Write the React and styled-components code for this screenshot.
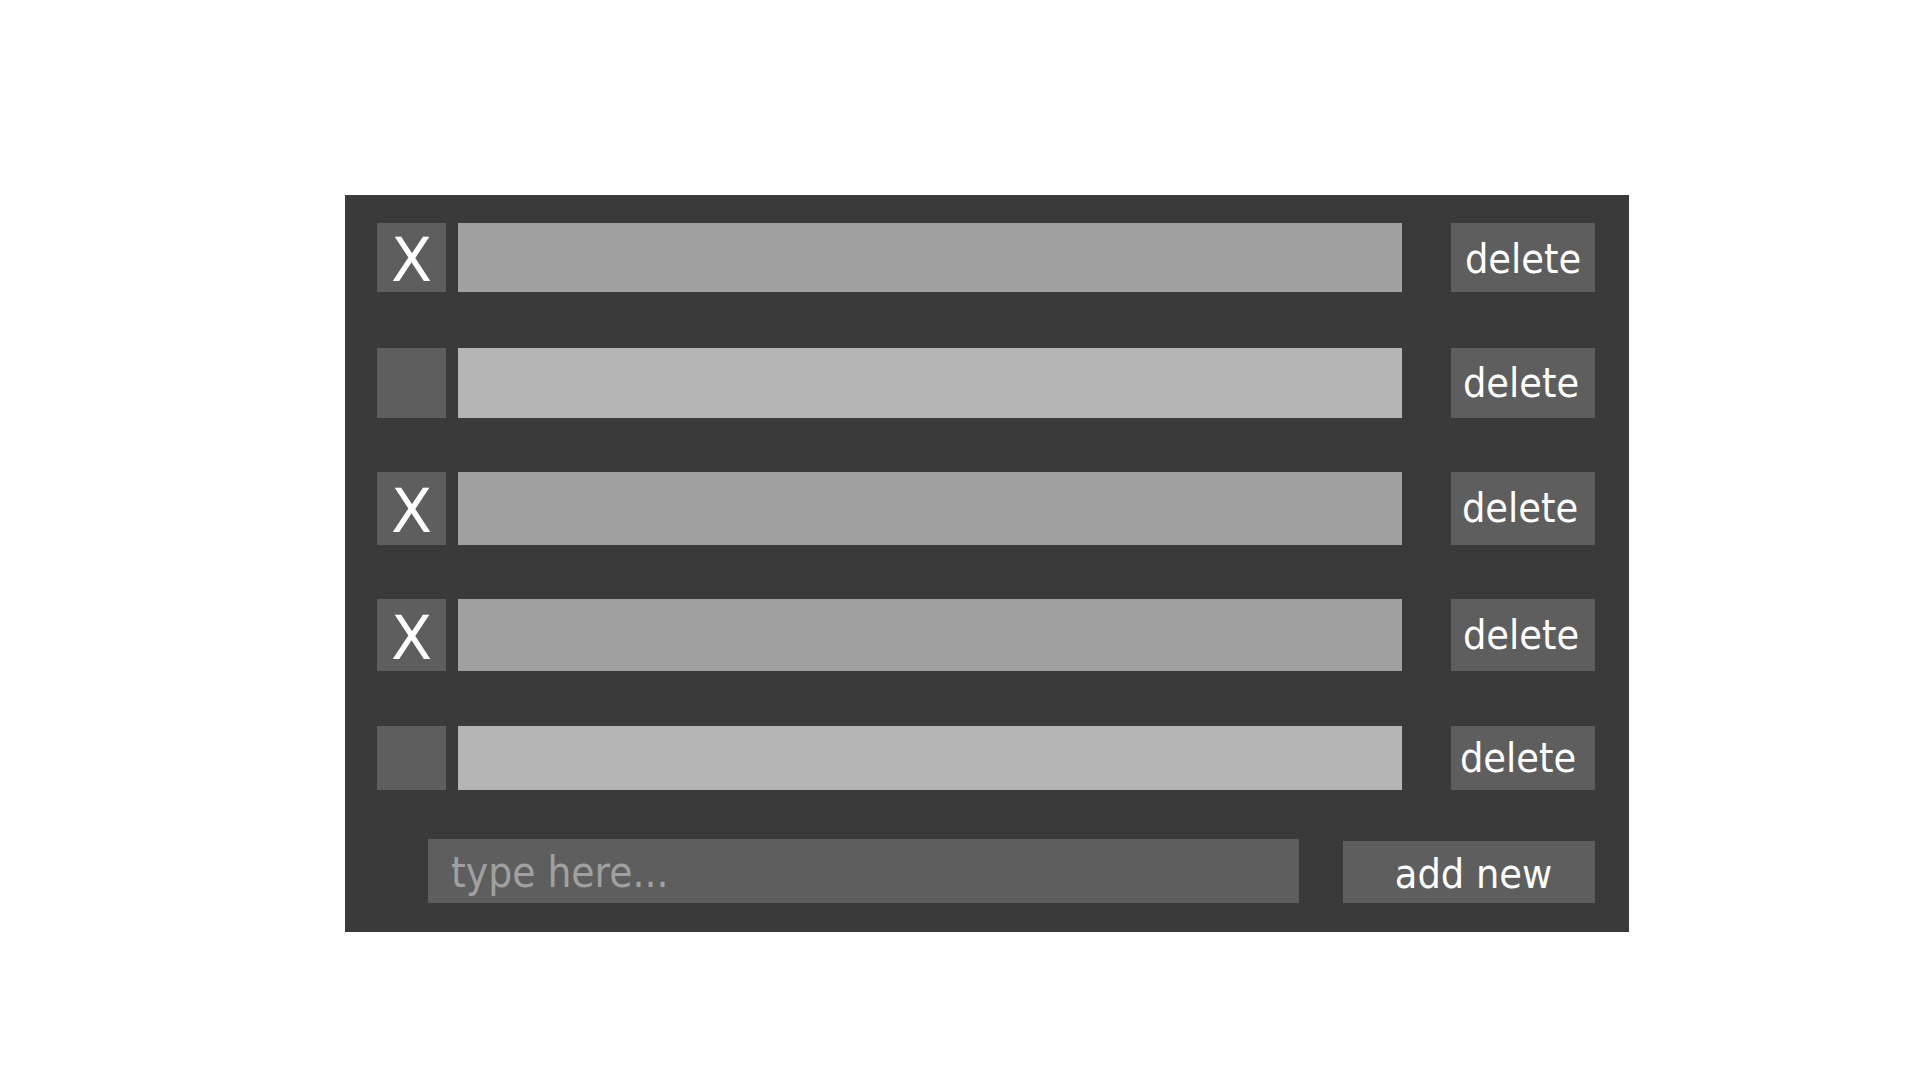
import React from 'react';
import styled, { createGlobalStyle } from 'styled-components';

const GlobalStyle = createGlobalStyle`
  html, body {
    margin: 0;
    padding: 0;
    background: #ffffff;
  }
  body {
    font-family: 'DejaVu Sans Condensed', 'DejaVu Sans', sans-serif;
    font-stretch: condensed;
  }
`;

const Page = styled.div`
  width: 1920px;
  height: 1080px;
  box-sizing: border-box;
  padding: 195px 0 0 345px;
`;

const Panel = styled.div`
  width: 1284px;
  box-sizing: border-box;
  padding: 28px 34px 29px 32px;
  background: #3a3a3a;
  display: flex;
  flex-direction: column;
`;

const Row = styled.div`
  display: flex;
  align-items: stretch;
  height: ${(p) => p.h}px;
  margin-bottom: ${(p) => p.gap}px;
`;

const Check = styled.div`
  width: 69px;
  flex: none;
  margin-right: 12px;
  background: #5e5e5e;
  color: #ffffff;
  display: flex;
  align-items: center;
  justify-content: center;
  font-family: 'DejaVu Sans', sans-serif;
  font-stretch: normal;
  font-size: 60px;
  line-height: 1;
  padding-top: 5px;
  box-sizing: border-box;
`;

const Bar = styled.div`
  flex: 1;
  background: ${(p) => (p.done ? '#a0a0a0' : '#b4b4b4')};
`;

const Button = styled.button`
  flex: none;
  width: ${(p) => p.w}px;
  border: none;
  padding: 0;
  margin: 0;
  background: #5e5e5e;
  color: #ffffff;
  font-family: 'DejaVu Sans Condensed', 'DejaVu Sans', sans-serif;
  font-stretch: condensed;
  font-size: 41px;
  line-height: 1;
  display: flex;
  align-items: center;
  justify-content: center;
`;

const DeleteButton = styled(Button)`
  margin-left: 49px;
  padding-top: ${(p) => p.lift}px;
  padding-right: ${(p) => p.shift}px;
`;

const InputRow = styled.div`
  display: flex;
  align-items: flex-end;
  padding-left: 51px;
  gap: 44px;
`;

const Input = styled.input`
  flex: 1;
  height: 64px;
  box-sizing: border-box;
  border: none;
  outline: none;
  background: #5e5e5e;
  padding: 2px 0 0 23px;
  color: #ffffff;
  font-family: 'DejaVu Sans Condensed', 'DejaVu Sans', sans-serif;
  font-stretch: condensed;
  font-size: 42px;

  &::placeholder {
    color: #a0a0a0;
  }
`;

const AddButton = styled(Button)`
  height: 62px;
  padding-top: 5px;
  padding-left: 9px;
`;

const items = [
  { id: 1, done: true, h: 69, gap: 56, shift: 0, lift: 4 },
  { id: 2, done: false, h: 70, gap: 54, shift: 4, lift: 0 },
  { id: 3, done: true, h: 73, gap: 54, shift: 6, lift: 0 },
  { id: 4, done: true, h: 72, gap: 55, shift: 4, lift: 1 },
  { id: 5, done: false, h: 64, gap: 49, shift: 10, lift: 0 },
];

export default function App() {
  return (
    <>
      <GlobalStyle />
      <Page>
        <Panel>
          {items.map((i) => (
            <Row key={i.id} h={i.h} gap={i.gap}>
              <Check>{i.done ? 'X' : ''}</Check>
              <Bar done={i.done} />
              <DeleteButton w={144} shift={i.shift} lift={i.lift}>
                delete
              </DeleteButton>
            </Row>
          ))}
          <InputRow>
            <Input placeholder='type here...' />
            <AddButton w={252}>add new</AddButton>
          </InputRow>
        </Panel>
      </Page>
    </>
  );
}
